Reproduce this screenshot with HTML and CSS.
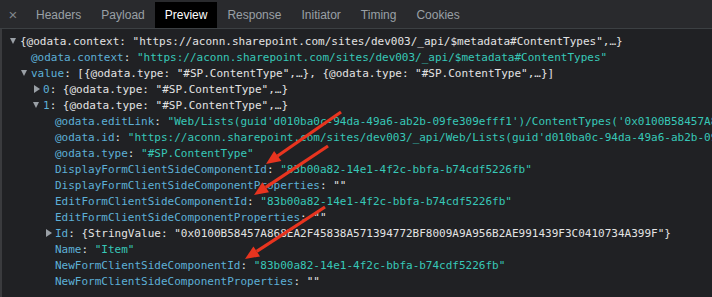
FILE: index.html
```html
<!DOCTYPE html>
<html>
<head>
<meta charset="utf-8">
<link rel="stylesheet" href="styles.css">
</head>
<body>
<div class="panel">
  <div class="tabs">
    <div class="tab close">×</div>
    <div class="tab">Headers</div>
    <div class="tab">Payload</div>
    <div class="tab active">Preview</div>
    <div class="tab">Response</div>
    <div class="tab">Initiator</div>
    <div class="tab">Timing</div>
    <div class="tab">Cookies</div>
  </div>
  <div class="tree">
    <div class="row d0"><span class="tg"><span class="down"></span></span><span class="w">{@odata.context: "https://aconn.sharepoint.com/sites/dev003/_api/$metadata#ContentTypes",…}</span></div>
    <div class="row d1"><span class="tg"></span><span class="k">@odata.context</span><span class="w">: </span><span class="s">"https://aconn.sharepoint.com/sites/dev003/_api/$metadata#ContentTypes"</span></div>
    <div class="row d1"><span class="tg"><span class="down"></span></span><span class="k">value</span><span class="w">: [{@odata.type: "#SP.ContentType",…}, {@odata.type: "#SP.ContentType",…}]</span></div>
    <div class="row d2"><span class="tg"><span class="right"></span></span><span class="k">0</span><span class="w">: {@odata.type: "#SP.ContentType",…}</span></div>
    <div class="row d2"><span class="tg"><span class="down"></span></span><span class="k">1</span><span class="w">: {@odata.type: "#SP.ContentType",…}</span></div>
    <div class="row d3"><span class="tg"></span><span class="k">@odata.editLink</span><span class="w">: </span><span class="s">"Web/Lists(guid'd010ba0c-94da-49a6-ab2b-09fe309efff1')/ContentTypes('0x0100B58457A868EA2F45838A571394772BF8009A9A956B2AE991439F3C0410734A399F')"</span></div>
    <div class="row d3"><span class="tg"></span><span class="k">@odata.id</span><span class="w">: </span><span class="s">"https://aconn.sharepoint.com/sites/dev003/_api/Web/Lists(guid'd010ba0c-94da-49a6-ab2b-09fe309efff1')/ContentTypes('0x0100B58457A868EA2F45838A571394772BF8009A9A956B2AE991439F3C0410734A399F')"</span></div>
    <div class="row d3"><span class="tg"></span><span class="k">@odata.type</span><span class="w">: </span><span class="s">"#SP.ContentType"</span></div>
    <div class="row d3"><span class="tg"></span><span class="k">DisplayFormClientSideComponentId</span><span class="w">: </span><span class="s">"83b00a82-14e1-4f2c-bbfa-b74cdf5226fb"</span></div>
    <div class="row d3"><span class="tg"></span><span class="k">DisplayFormClientSideComponentProperties</span><span class="w">: ""</span></div>
    <div class="row d3"><span class="tg"></span><span class="k">EditFormClientSideComponentId</span><span class="w">: </span><span class="s">"83b00a82-14e1-4f2c-bbfa-b74cdf5226fb"</span></div>
    <div class="row d3"><span class="tg"></span><span class="k">EditFormClientSideComponentProperties</span><span class="w">: ""</span></div>
    <div class="row d3"><span class="tg"><span class="right"></span></span><span class="k">Id</span><span class="w">: {StringValue: "0x0100B58457A868EA2F45838A571394772BF8009A9A956B2AE991439F3C0410734A399F"}</span></div>
    <div class="row d3"><span class="tg"></span><span class="k">Name</span><span class="w">: </span><span class="s">"Item"</span></div>
    <div class="row d3"><span class="tg"></span><span class="k">NewFormClientSideComponentId</span><span class="w">: </span><span class="s">"83b00a82-14e1-4f2c-bbfa-b74cdf5226fb"</span></div>
    <div class="row d3"><span class="tg"></span><span class="k">NewFormClientSideComponentProperties</span><span class="w">: ""</span></div>
  </div>
  <svg class="arrows" width="712" height="297" viewBox="0 0 712 297">
    <line x1="341" y1="112" x2="277.5" y2="156" />
    <polygon points="266,164 281.4,160.9 274.1,151.1" />
    <line x1="328" y1="146" x2="265.7" y2="187.3" />
    <polygon points="254,195 269,192.3 262.4,182.3" />
    <line x1="325" y1="207" x2="256.7" y2="251.4" />
    <polygon points="245,259 260,256.4 253.4,246.4" />
  </svg>
</div>
</body>
</html>
```
FILE: styles.css
```css
html, body {
  margin: 0;
  padding: 0;
  background: #202124;
}
.panel {
  position: relative;
  width: 712px;
  height: 297px;
  overflow: hidden;
  background: #202124;
}
.tabs {
  display: flex;
  height: 26px;
  padding-top: 2px;
  background: #292a2d;
  border-top: 1px solid #3c4043;
  border-bottom: 1px solid #3c4043;
  box-sizing: content-box;
  margin-top: -1px;
}
.tab {
  padding: 0 10px;
  line-height: 26px;
  font-family: "Liberation Sans", Arial, sans-serif;
  font-size: 12px;
  color: #9aa0a6;
  white-space: nowrap;
}
.tab.close {
  width: 26px;
  padding: 0;
  text-align: center;
  font-size: 15px;
  color: #80868b;
  box-sizing: border-box;
}
.tab.active {
  background: #000;
  color: #fff;
}
.tree {
  padding-top: 4px;
  border-left: 2px solid #3a3b3e;
  height: 270px;
  box-sizing: border-box;
}
.row {
  display: flex;
  align-items: center;
  height: 16px;
  font-family: "DejaVu Sans Mono", Menlo, monospace;
  font-size: 11px;
  white-space: pre;
  overflow: hidden;
}
.d0 { padding-left: 8px; }
.d1 { padding-left: 19px; }
.d2 { padding-left: 31px; }
.d3 { padding-left: 43px; }
.tg {
  flex: none;
  width: 10px;
  height: 16px;
  display: flex;
  align-items: center;
}
.down {
  width: 0;
  height: 0;
  border-left: 3.5px solid transparent;
  border-right: 3.5px solid transparent;
  border-top: 6px solid #9aa0a6;
  margin-left: 0;
}
.right {
  width: 0;
  height: 0;
  border-top: 4px solid transparent;
  border-bottom: 4px solid transparent;
  border-left: 6px solid #9aa0a6;
  margin-left: 1px;
}
.k { color: #5db0d7; }
.w { color: #e3e3e3; }
.s { color: #37c8b8; }
.arrows {
  position: absolute;
  left: 0;
  top: 0;
  pointer-events: none;
}
.arrows line {
  stroke: #e8341f;
  stroke-width: 3.2;
}
.arrows polygon {
  fill: #e8341f;
}
```
